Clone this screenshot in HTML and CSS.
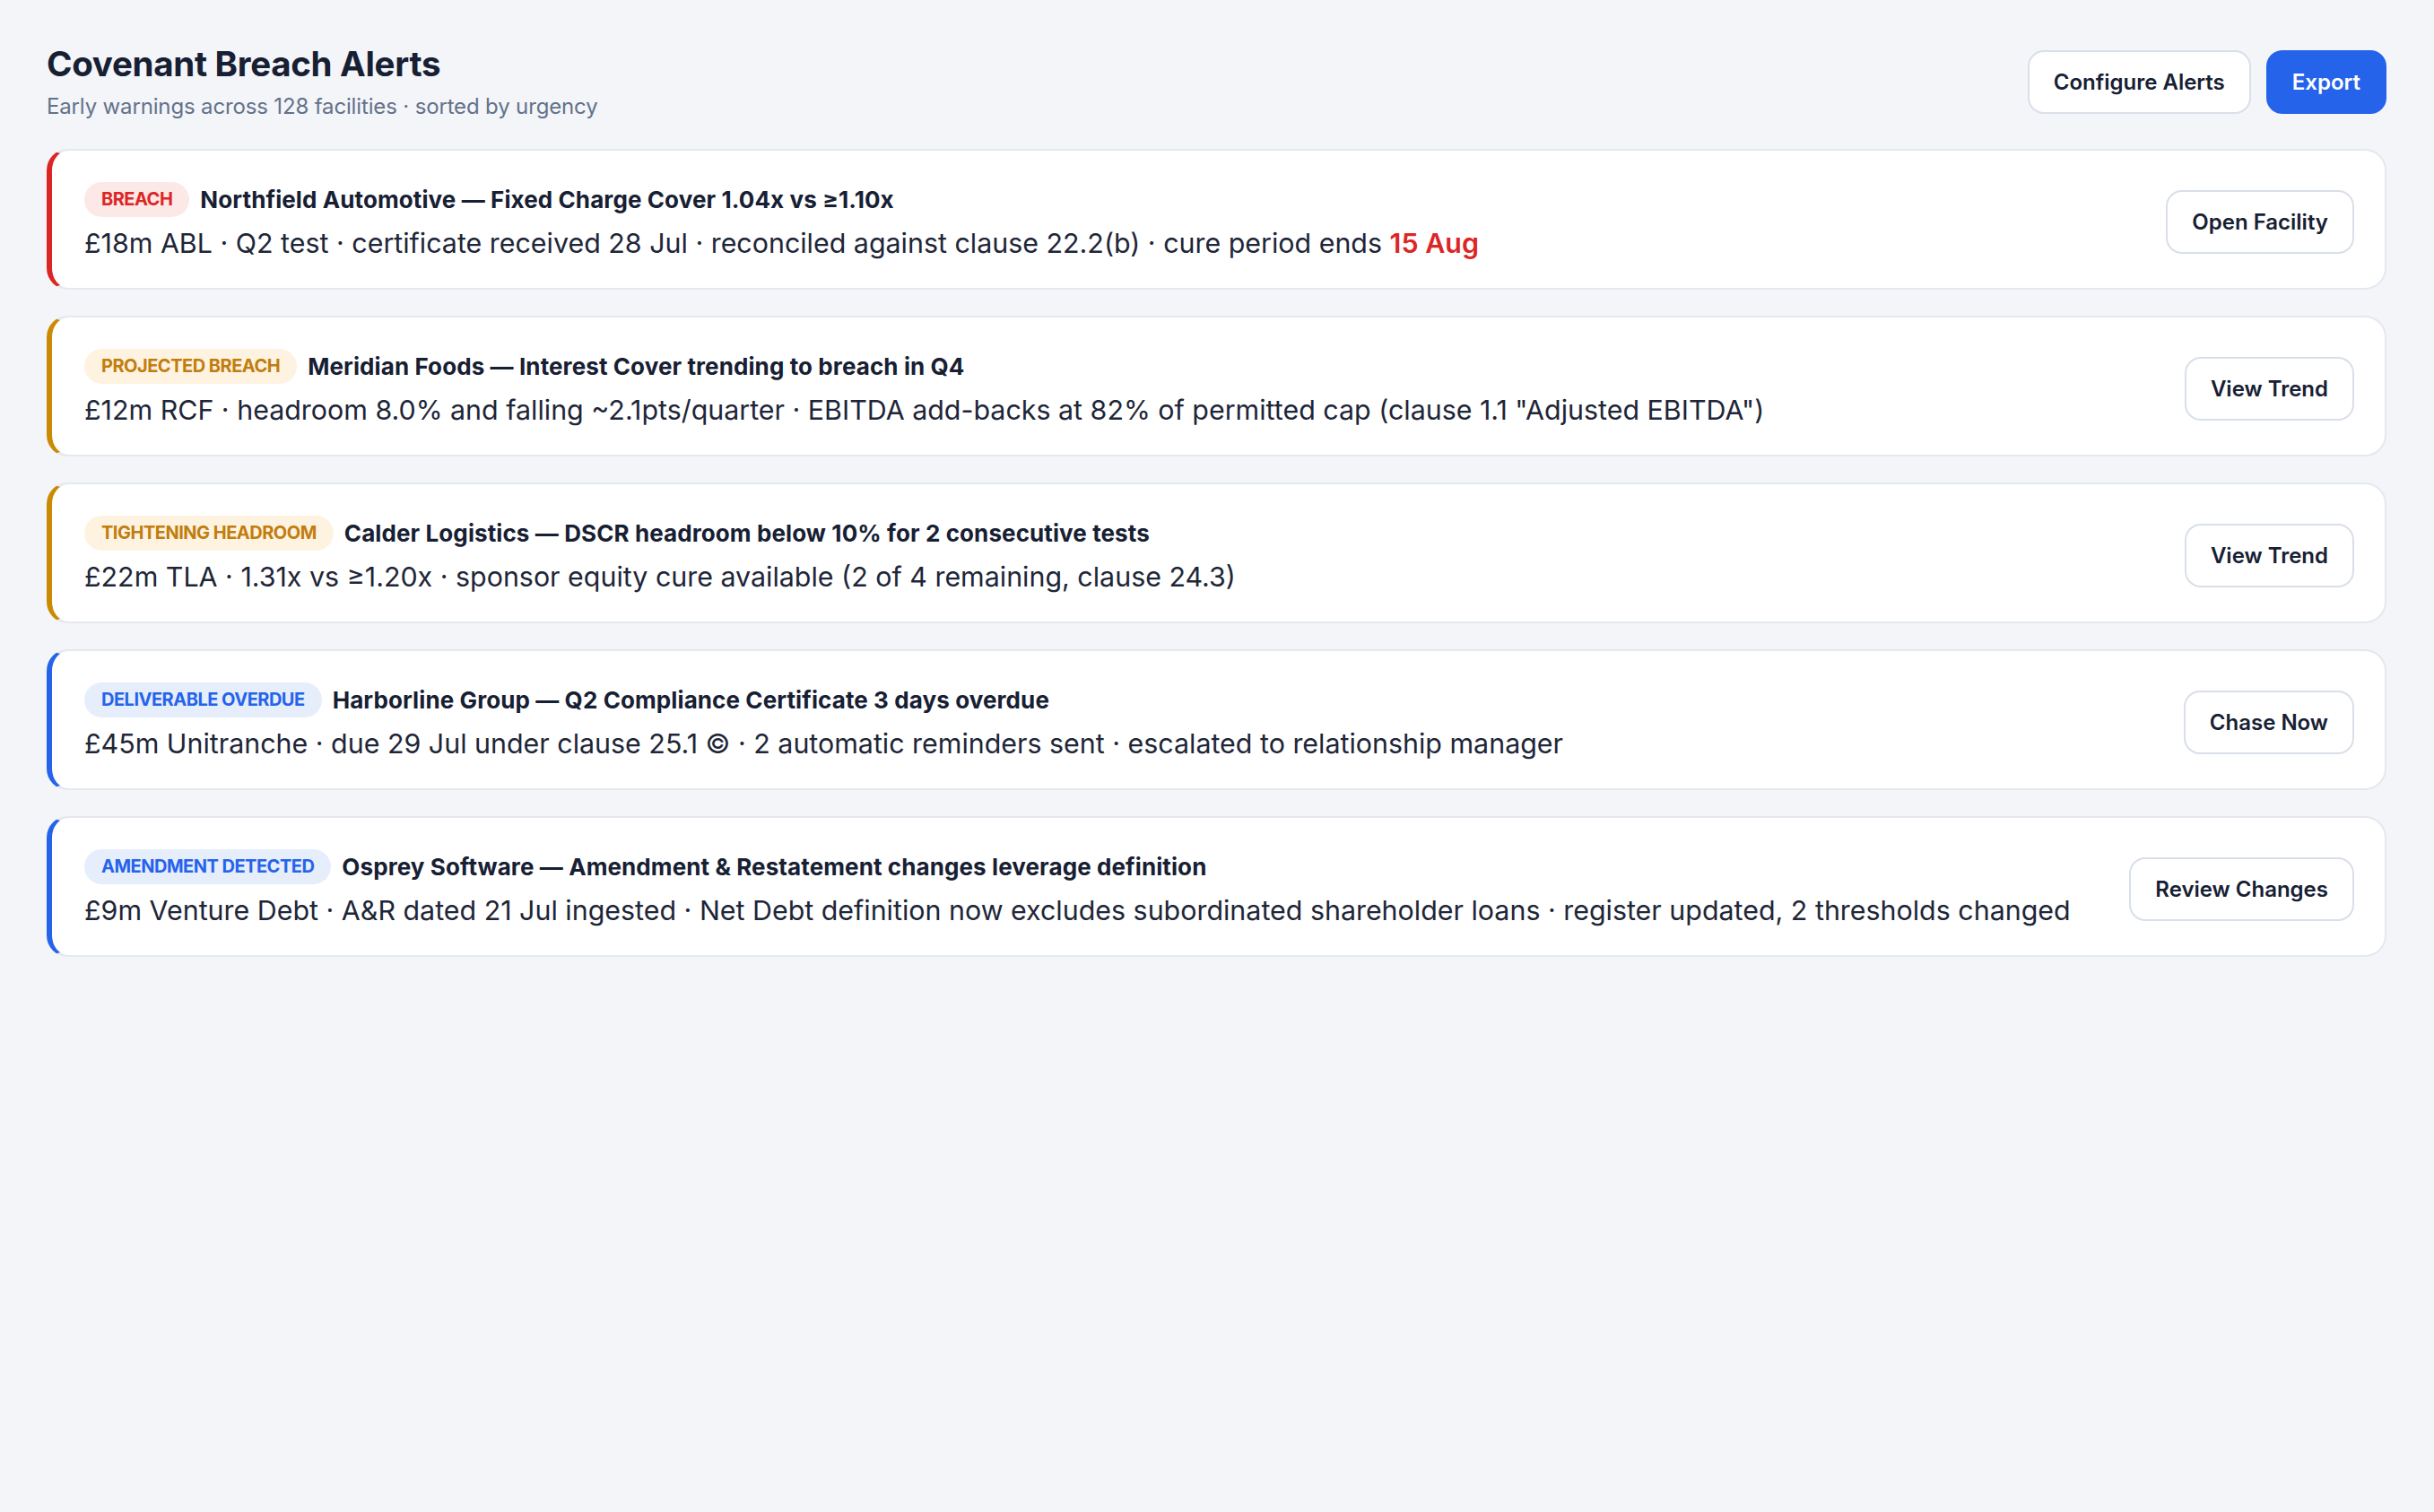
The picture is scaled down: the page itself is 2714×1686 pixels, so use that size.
FILE: index.html
```html
<!DOCTYPE html>
<html lang="en">
<head>
    <meta charset="UTF-8">
    <meta name="viewport" content="width=device-width, initial-scale=1.0">
    <title>Covenant Breach Alerts</title>
    <link rel="stylesheet" href="styles.css">
</head>
<body>
    <header class="page-head">
        <div>
            <h1>Covenant Breach Alerts</h1>
            <p class="subtitle">Early warnings across 128 facilities · sorted by urgency</p>
        </div>
        <div class="head-actions">
            <button class="btn">Configure Alerts</button>
            <button class="btn btn-primary">Export</button>
        </div>
    </header>

    <main class="alerts">
        <section class="alert alert-red">
            <div class="alert-main">
                <div class="alert-top">
                    <span class="tag tag-red">BREACH</span>
                    <h2>Northfield Automotive — Fixed Charge Cover 1.04x vs ≥1.10x</h2>
                </div>
                <p class="alert-body">£18m ABL · Q2 test · certificate received 28 Jul · reconciled against clause 22.2(b) · cure period ends <span class="due">15 Aug</span></p>
            </div>
            <button class="btn">Open Facility</button>
        </section>

        <section class="alert alert-amber">
            <div class="alert-main">
                <div class="alert-top">
                    <span class="tag tag-amber">PROJECTED BREACH</span>
                    <h2>Meridian Foods — Interest Cover trending to breach in Q4</h2>
                </div>
                <p class="alert-body">£12m RCF · headroom 8.0% and falling ~2.1pts/quarter · EBITDA add-backs at 82% of permitted cap (clause 1.1 "Adjusted EBITDA")</p>
            </div>
            <button class="btn">View Trend</button>
        </section>

        <section class="alert alert-amber">
            <div class="alert-main">
                <div class="alert-top">
                    <span class="tag tag-amber">TIGHTENING HEADROOM</span>
                    <h2>Calder Logistics — DSCR headroom below 10% for 2 consecutive tests</h2>
                </div>
                <p class="alert-body">£22m TLA · 1.31x vs ≥1.20x · sponsor equity cure available (2 of 4 remaining, clause 24.3)</p>
            </div>
            <button class="btn">View Trend</button>
        </section>

        <section class="alert alert-blue">
            <div class="alert-main">
                <div class="alert-top">
                    <span class="tag tag-blue">DELIVERABLE OVERDUE</span>
                    <h2>Harborline Group — Q2 Compliance Certificate 3 days overdue</h2>
                </div>
                <p class="alert-body">£45m Unitranche · due 29 Jul under clause 25.1 © · 2 automatic reminders sent · escalated to relationship manager</p>
            </div>
            <button class="btn">Chase Now</button>
        </section>

        <section class="alert alert-blue">
            <div class="alert-main">
                <div class="alert-top">
                    <span class="tag tag-blue">AMENDMENT DETECTED</span>
                    <h2>Osprey Software — Amendment &amp; Restatement changes leverage definition</h2>
                </div>
                <p class="alert-body">£9m Venture Debt · A&amp;R dated 21 Jul ingested · Net Debt definition now excludes subordinated shareholder loans · register updated, 2 thresholds changed</p>
            </div>
            <button class="btn">Review Changes</button>
        </section>
    </main>
</body>
</html>
```

FILE: styles.css
```css
body {
    margin: 0;
    padding: 47px 53px 52px 52px;
    background-color: #f3f5f9;
    font-family: Inter, "Noto Sans", sans-serif;
    color: #172033;
}
.page-head {
    display: flex;
    justify-content: space-between;
    align-items: center;
    margin-bottom: 31px;
}
h1 {
    margin: 0;
    font-size: 38.5px;
    line-height: 48px;
    font-weight: 700;
    letter-spacing: -0.3px;
}
.subtitle {
    margin: 8px 0 0;
    font-size: 24px;
    line-height: 32px;
    color: #64718a;
    letter-spacing: -0.15px;
}
.head-actions {
    display: flex;
    gap: 17px;
}
.btn {
    font-family: inherit;
    font-size: 24px;
    line-height: 31px;
    font-weight: 600;
    padding: 18px 27px;
    border: 2px solid #d9dfe9;
    border-radius: 18px;
    background-color: #fff;
    color: #172033;
    white-space: nowrap;
    cursor: pointer;
}
.btn-primary {
    background-color: #2563eb;
    border-color: #2563eb;
    color: #fff;
}
.alerts {
    display: flex;
    flex-direction: column;
    gap: 29px;
}
.alert {
    display: flex;
    align-items: center;
    gap: 20px;
    padding: 35px 34px 29px 36px;
    background-color: #fff;
    border: 2px solid #e4e8ef;
    border-left: 6px solid #dc2626;
    border-radius: 24px;
}
.alert-amber {
    border-left-color: #ca8a04;
}
.alert-blue {
    border-left-color: #2563eb;
}
.alert-main {
    flex: 1;
    min-width: 0;
}
.alert-top {
    display: flex;
    align-items: center;
    gap: 12px;
}
.alert-top h2 {
    margin: 0;
    font-size: 26px;
    line-height: 32px;
    font-weight: 700;
    letter-spacing: 0.1px;
    white-space: nowrap;
}
.tag {
    font-size: 20px;
    line-height: 39px;
    font-weight: 700;
    letter-spacing: -0.5px;
    padding: 0 19px;
    border-radius: 20px;
    white-space: nowrap;
}
.tag-red {
    background-color: #fde8e8;
    color: #dc2626;
}
.tag-amber {
    background-color: #fef3e0;
    color: #c27d0e;
}
.tag-blue {
    background-color: #e6eefc;
    color: #2563eb;
}
.alert-body {
    margin: 8px 0 0;
    font-size: 30.4px;
    line-height: 42px;
    color: #1e2638;
    white-space: nowrap;
}
.due {
    color: #dc2626;
    font-weight: 600;
}
```
